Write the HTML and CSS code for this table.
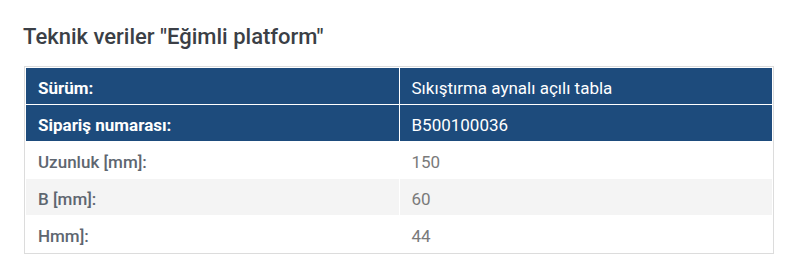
FILE: index.html
```html
<!DOCTYPE html>
<html lang="tr">
<head>
<meta charset="utf-8">
<link rel="stylesheet" href="styles.css">
</head>
<body>
<section class="specs">
  <h2 class="specs-title">Teknik veriler "Eğimli platform"</h2>
  <table class="specs-table">
    <tbody>
      <tr class="row-head"><th>Sürüm:</th><td>Sıkıştırma aynalı açılı tabla</td></tr>
      <tr class="row-head"><th>Sipariş numarası:</th><td>B500100036</td></tr>
      <tr class="row-plain"><th>Uzunluk [mm]:</th><td>150</td></tr>
      <tr class="row-alt"><th>B [mm]:</th><td>60</td></tr>
      <tr class="row-plain"><th>Hmm]:</th><td>44</td></tr>
    </tbody>
  </table>
</section>
</body>
</html>
```

FILE: styles.css
```css
* { box-sizing: border-box; }
html, body { margin: 0; padding: 0; background: #fff; }
body { font-family: Roboto, "Noto Sans", Arial, sans-serif; }
.specs { padding: 23px 24px 0 24px; }
.specs-title {
  margin: 0 0 16px -1px;
  font-size: 22px;
  font-weight: 500;
  line-height: 27px;
  color: #3b3f46;
}
.specs-table {
  width: 750px;
  border: 1px solid #dcdcdc;
  border-collapse: separate;
  border-spacing: 1px;
  background: #fff;
  font-size: 17px;
}
.specs-table th, .specs-table td {
  height: 36px;
  padding: 4px 12px 0 12px;
  line-height: 20px;
  text-align: left;
  vertical-align: middle;
  width: 50%;
}
.row-head th, .row-head td { background: #1d4b7c; color: #fff; }
.row-head th { font-weight: 700; }
.row-head td { font-weight: 400; }
.row-plain th, .row-plain td { background: #fff; }
.row-alt th, .row-alt td { background: #f4f4f4; }
.row-plain th, .row-alt th { color: #5e6670; font-weight: 500; }
.row-plain td, .row-alt td { color: #7a7a7a; font-weight: 400; }
```
